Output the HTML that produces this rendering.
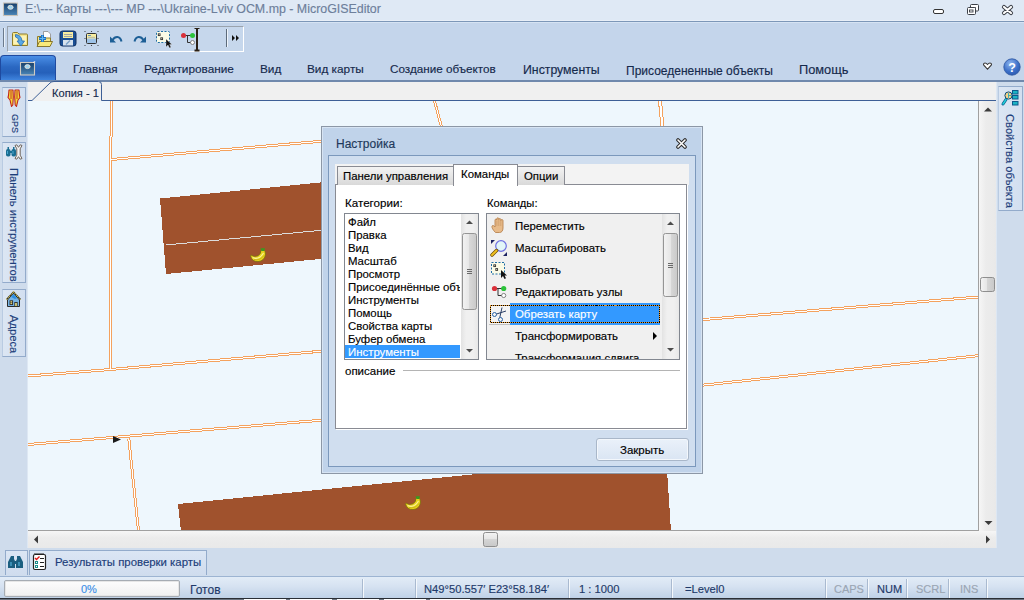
<!DOCTYPE html>
<html><head><meta charset="utf-8">
<style>
*{box-sizing:border-box}
html,body{margin:0;padding:0}
body{width:1024px;height:600px;overflow:hidden;position:relative;background:#cfdcec;font-family:"Liberation Sans",sans-serif;font-size:12px;color:#000}
.a{position:absolute}
.t{position:absolute;white-space:nowrap;line-height:1;-webkit-text-stroke:0.15px currentColor}
</style></head><body>

<!-- title bar -->
<div class="a" style="left:0;top:0;width:1024px;height:21px;background:#dfe9f5"></div>
<div class="a" style="left:0;top:20px;width:1024px;height:1px;background:#e8eff8"></div>
<div class="a" style="left:0;top:21px;width:1024px;height:1px;background:#7d97b8"></div>
<div class="a" style="left:0;top:22px;width:1024px;height:1px;background:#d6e3f3"></div>
<!-- ribbon -->
<div class="a" style="left:0;top:23px;width:1024px;height:57px;background:#c4d5eb"></div>
<div class="a" style="left:0;top:80px;width:1024px;height:2px;background:#7089ad"></div>

<!-- tab strip -->
<div class="a" style="left:28px;top:82px;width:968px;height:19px;background:#f0f0f0"></div>


<!-- title text -->
<svg class="a" style="left:2px;top:1px" width="17" height="16" viewBox="0 0 17 16">
<defs><linearGradient id="ig" x1="0" x2="0" y1="0" y2="1"><stop offset="0" stop-color="#163e6a"/><stop offset="1" stop-color="#4a86b8"/></linearGradient></defs>
<rect x="1.5" y="2" width="14" height="12.5" fill="url(#ig)" stroke="#c8c2b8" stroke-width="1.1"/>
<ellipse cx="8.5" cy="6.3" rx="2.6" ry="2" fill="#9fd4f0" stroke="#e8e4dc" stroke-width="0.9"/>
<path d="M14,2 l2,-1" stroke="#ddd" stroke-width="1"/>
</svg>
<div class="t" style="left:25px;top:3px;font-size:12.4px;color:#6d7f9b">E:\--- Карты ---\--- MP ---\Ukraine-Lviv OCM.mp - MicroGISEditor</div>
<!-- window buttons -->
<svg class="a" style="left:930px;top:2px" width="94" height="18" viewBox="930 2 94 18">
<rect x="933.5" y="9.5" width="10" height="4" rx="1.5" fill="#fff" stroke="#333" stroke-width="1"/>
<rect x="970.5" y="4.5" width="8" height="6.5" rx="1" fill="#fff" stroke="#3c4048"/>
<path d="M973.5,7.5h2v1.5" stroke="#3c4048" fill="none"/>
<rect x="967.5" y="7.5" width="8" height="7" rx="1" fill="#fff" stroke="#3c4048"/>
<rect x="969.5" y="10" width="3.5" height="2" fill="none" stroke="#3c4048" stroke-width="0.9"/>
<path d="M1004,7 L1011,13 M1011,7 L1004,13" stroke="#3c4048" stroke-width="4.2" stroke-linecap="round"/>
<path d="M1004,7 L1011,13 M1011,7 L1004,13" stroke="#fff" stroke-width="2.2" stroke-linecap="round"/>
</svg>

<!-- toolbar -->
<div class="a" style="left:3px;top:28px;width:2px;height:19px;background:#6b7a8c;border-right:1px solid #e8f0f8"></div>
<div class="a" style="left:7px;top:26px;width:237px;height:26px;border:1px solid #9aa3ad;border-right-color:#fff;border-bottom-color:#fff;background:#c6d7ec"></div>
<div class="a" style="left:226px;top:29px;width:1px;height:18px;background:#5d6b7b"></div>
<div class="a" style="left:227px;top:29px;width:1px;height:18px;background:#eef4fb"></div>
<svg class="a" style="left:231px;top:33px" width="10" height="10"><path d="M1,2 L4,5 L1,8Z M5,2 L8,5 L5,8Z" fill="#111"/></svg>
<svg class="a" style="left:10px;top:28px" width="230" height="24" viewBox="10 28 230 24">
<!-- open folder -->
<path d="M12.5,45.5 V33.5 q0,-1 1,-1 h4 l1.5,1.5 h7.5 q1,0 1,1 V45.5z" fill="#f5e58a" stroke="#8f7d2c"/>
<path d="M13.5,44 V36 h12.5 V44z" fill="#fbf3b8"/>
<path d="M15.5,34.5 q6,0.5 6.5,6.5 h2.5 l-3.5,5 -4,-5 h2 q-0.5,-3.5 -3.5,-4z" fill="#58a8e6" stroke="#2a6cb0" stroke-width="0.8"/>
<!-- new folder -->
<path d="M43.5,31.5 h4.5 l2.5,2.5 v6 h-7z" fill="#fff" stroke="#8c8c8c" stroke-width="0.8"/>
<path d="M37.5,45.5 V36.5 h4 l1.5,1.5 h7.5 V45.5z" fill="#f5e58a" stroke="#8f7d2c"/>
<path d="M37,46.5 l2.5,-5 h13 l-2.5,5z" fill="#f9ea7a" stroke="#7d6c22" stroke-width="0.9"/>
<path d="M42.5,35 v7 M39,38.5 h7" stroke="#1c6fc0" stroke-width="3"/>
<path d="M42.5,35.5 v6 M39.5,38.5 h6" stroke="#62b6f0" stroke-width="1.2"/>
<!-- save -->
<rect x="60" y="31" width="16" height="15" rx="2.5" fill="#1b4f94" stroke="#0f2f60"/>
<rect x="63" y="32" width="10" height="6" fill="#f8eda0"/>
<path d="M64,34.5h8M64,36.5h8" stroke="#8a93a8" stroke-width="0.8"/>
<rect x="63" y="40" width="10" height="5.5" fill="#d6e2ee"/>
<path d="M66,44.5 l4,-4" stroke="#7aa0c8" stroke-width="1.5"/>
<!-- save as / print -->
<g fill="#333"><circle cx="85" cy="31.5" r="0.6"/><circle cx="91.5" cy="31.5" r="0.6"/><circle cx="98" cy="31.5" r="0.6"/><circle cx="85" cy="38.5" r="0.6"/><circle cx="98" cy="38.5" r="0.6"/><circle cx="85" cy="45.5" r="0.6"/><circle cx="91.5" cy="45.5" r="0.6"/><circle cx="98" cy="45.5" r="0.6"/></g>
<rect x="86.5" y="33.5" width="10" height="10" rx="1" fill="#9ec3e8" stroke="#333"/>
<rect x="87" y="34" width="9" height="4.5" fill="#f8eda0"/>
<path d="M88,35.5h3" stroke="#3a7ac0" stroke-width="0.8"/>
<path d="M88,37.3h7" stroke="#8a93a8" stroke-width="0.6"/>
<!-- undo -->
<path d="M110,36.5 V42.5 H116 Z" fill="#1d5f96"/>
<path d="M112.5,40 C115,36 120,35.5 121.5,41.5" fill="none" stroke="#1d5f96" stroke-width="2"/>
<!-- redo -->
<path d="M146,36.5 V42.5 H140 Z" fill="#1d5f96"/>
<path d="M143.5,40 C141,36 136,35.5 134.5,41.5" fill="none" stroke="#1d5f96" stroke-width="2"/>
<!-- select -->
<rect x="156.5" y="31.5" width="13" height="11" rx="1" fill="#fbfbe6" stroke="#1f6fa6" stroke-dasharray="2,1.5"/>
<rect x="158.3" y="33.8" width="1.8" height="1.8" fill="none" stroke="#333" stroke-width="0.9"/>
<rect x="160.8" y="37.8" width="1.8" height="1.8" fill="none" stroke="#333" stroke-width="0.9"/>
<path d="M166,39 L166,47 L168,45 L169.5,48 L171,47.3 L169.6,44.5 L172,44.5 Z" fill="#111" stroke="#fff" stroke-width="0.3"/>
<!-- nodes -->
<path d="M183.5,35.5 H192.5 M187.5,35.5 V42.5 H192" stroke="#333" stroke-width="1" fill="none"/>
<circle cx="183.5" cy="35.5" r="2.5" fill="#d9303a"/>
<circle cx="192.5" cy="35.5" r="2.5" fill="#2bc23a"/>
<circle cx="192.5" cy="42.5" r="2" fill="#fff" stroke="#777" stroke-width="0.9"/>
<!-- I-beam cursor -->
<path d="M194.5,28 h5 M197,28 V50.5 M194.5,50.5 h5" stroke="#2a2016" stroke-width="2"/>
</svg>

<!-- app button -->
<div class="a" style="left:0;top:55px;width:56px;height:25px;border:1px solid #1f4aa0;border-bottom:none;border-radius:4px 4px 0 0;background:linear-gradient(#4a8ee6,#2b68c2 45%,#2560ba 70%,#3f84de)"></div>
<svg class="a" style="left:19px;top:61px" width="17" height="15" viewBox="0 0 17 15">
<rect x="1.5" y="1.5" width="14" height="12.5" fill="url(#ig)" stroke="#cfcac2" stroke-width="1.1"/>
<ellipse cx="8.5" cy="5.6" rx="2.6" ry="2" fill="#9fd4f0" stroke="#e8e4dc" stroke-width="0.9"/>
<path d="M14,1.5 l2.2,-1" stroke="#eee" stroke-width="1"/>
</svg>
<!-- menu -->
<div class="t" style="left:73px;top:63px;font-size:11.7px;color:#15294b">Главная</div>
<div class="t" style="left:144px;top:64px;font-size:11.8px;color:#15294b">Редактирование</div>
<div class="t" style="left:260px;top:64px;font-size:11.8px;color:#15294b">Вид</div>
<div class="t" style="left:307px;top:64px;font-size:11.8px;color:#15294b">Вид карты</div>
<div class="t" style="left:390px;top:63px;font-size:11.7px;color:#15294b">Создание объектов</div>
<div class="t" style="left:523px;top:64px;font-size:12.3px;color:#15294b">Инструменты</div>
<div class="t" style="left:626px;top:65px;font-size:12px;color:#15294b">Присоедененные объекты</div>
<div class="t" style="left:799px;top:64px;font-size:12.8px;color:#15294b">Помощь</div>
<svg class="a" style="left:980px;top:60px" width="14" height="12"><path d="M3.5,4.2 Q3.8,3 5,3 Q6.2,3 7.5,4.5 Q8.8,3 10,3 Q11.2,3 11.5,4.2 Q11.5,5 10.5,6 L7.5,9.3 L4.5,6 Q3.5,5 3.5,4.2Z" fill="#fff" stroke="#333" stroke-width="1.1"/></svg>
<svg class="a" style="left:1002px;top:58px" width="20" height="18" viewBox="0 0 20 18">
<defs><radialGradient id="hg" cx="0.4" cy="0.3" r="0.8"><stop offset="0" stop-color="#8fb5ee"/><stop offset="0.6" stop-color="#3b6fc8"/><stop offset="1" stop-color="#2a55a8"/></radialGradient></defs>
<circle cx="10" cy="9" r="8.2" fill="url(#hg)" stroke="#2c56a0" stroke-width="0.8"/>
<text x="10" y="13.5" text-anchor="middle" font-family="Liberation Sans" font-weight="bold" font-size="12.5" fill="#fff">?</text>
</svg>

<!-- doc tab -->
<svg class="a" style="left:20px;top:80px" width="980" height="22" viewBox="20 80 980 22">
<path d="M28,100.5 H32 L50,83 Q51.5,81.5 54,81.5 H98.5 Q101.5,81.5 101.5,84.5 V100.5 H996" fill="#f0f0f0" stroke="#3d5f96" stroke-width="1"/>
</svg>
<div class="a" style="left:28px;top:101px;width:950px;height:1px;background:#fff"></div>
<div class="t" style="left:52px;top:88px;font-size:11.1px;color:#15294b">Копия - 1</div>

<!-- left panel -->
<div class="a" style="left:0;top:82px;width:28px;height:466px;background:#cfdcec"></div>
<!-- right panel -->
<div class="a" style="left:996px;top:82px;width:28px;height:466px;background:#cfdcec"></div>


<!-- left panel tabs -->
<div class="a" style="left:27px;top:82px;width:1px;height:466px;background:#dde7f3"></div>
<div class="a" style="left:2px;top:87px;width:24px;height:50px;background:linear-gradient(90deg,#dce6f3,#d2dff0);border:1px solid #93abcb;border-left-color:#b9cbe2"></div>
<div class="a" style="left:2px;top:142px;width:24px;height:141px;background:linear-gradient(90deg,#dce6f3,#d2dff0);border:1px solid #93abcb;border-left-color:#b9cbe2"></div>
<div class="a" style="left:2px;top:289px;width:24px;height:68px;background:linear-gradient(90deg,#dce6f3,#d2dff0);border:1px solid #93abcb;border-left-color:#b9cbe2"></div>
<div class="t" style="left:9px;top:114px;font-size:9px;color:#1c3d7a;transform-origin:0 0;transform:translate(10px,0) rotate(90deg)">GPS</div>
<div class="t" style="left:9px;top:168px;font-size:11.2px;color:#1c3d7a;transform-origin:0 0;transform:translate(10px,0) rotate(90deg)">Панель инструментов</div>
<div class="t" style="left:9px;top:315px;font-size:11.2px;color:#1c3d7a;transform-origin:0 0;transform:translate(10px,0) rotate(90deg)">Адреса</div>
<svg class="a" style="left:0;top:85px" width="28" height="230" viewBox="0 85 28 230">
<!-- GPS icon -->
<path d="M9,90 L13,90 L13.3,97 L12.8,105 L11.5,106.5 L10,100 L8,97.5 L8.5,95.5 Z" fill="#f3d83a" stroke="#c2261c" stroke-width="1.1" stroke-linejoin="round"/>
<path d="M19,90 L15,90 L14.7,97 L15.2,105 L16.5,106.5 L18,100 L20,97.5 L19.5,95.5 Z" fill="#f3d83a" stroke="#c2261c" stroke-width="1.1" stroke-linejoin="round"/>
<path d="M11,91 V99 M17,91 V99" stroke="#c2261c" stroke-width="0.9"/>
<!-- binoculars + wrench -->
<rect x="6" y="149" width="4.5" height="7.5" rx="1.8" fill="#1b6e92"/>
<rect x="11.5" y="149" width="4.5" height="7.5" rx="1.8" fill="#1b6e92"/>
<rect x="7.5" y="147" width="1.5" height="3" fill="#1b6e92"/><rect x="13" y="147" width="1.5" height="3" fill="#1b6e92"/>
<rect x="9" y="151" width="4" height="2" fill="#1b6e92"/>
<path d="M7.5,151 v3 M13,151 v3" stroke="#58b8e0" stroke-width="0.8"/>
<path d="M15,145.5 L16.8,144.8 L18.5,147.3 L20.2,144.8 L22,145.5 L20.2,148.8 V155.2 L22,158.5 L20.2,159.2 L18.5,156.7 L16.8,159.2 L15,158.5 L16.8,155.2 V148.8 Z" fill="#f4f4f4" stroke="#6f665d" stroke-width="1"/>
<!-- house -->
<path d="M7.5,300 L13.5,293 L19.5,300 V306.5 H7.5 Z" fill="#78b4e4" stroke="#2a2a2a" stroke-width="1"/>
<path d="M11,297 L13.5,294 L17,298 L15,299z" fill="#2f8fe0"/>
<path d="M6.5,299.5 L13.5,292 L20.5,299.5" fill="none" stroke="#222" stroke-width="1.4"/>
<path d="M6.5,299.5 L13.5,292 L20.5,299.5" fill="none" stroke="#f5e060" stroke-width="1.2" stroke-dasharray="1,1"/>
<rect x="10" y="300.8" width="2.6" height="3.8" fill="#f5e27a" stroke="#2a2a2a" stroke-width="0.9"/>
<path d="M10,302.7h2.6" stroke="#2a2a2a" stroke-width="0.6"/>
<rect x="14.8" y="302.5" width="2.4" height="4" fill="#f8f08a" stroke="#2a2a2a" stroke-width="0.9"/>
</svg>

<!-- right panel tab -->
<div class="a" style="left:996px;top:82px;width:1px;height:466px;background:#dde7f3"></div>
<div class="a" style="left:998px;top:86px;width:25px;height:125px;background:linear-gradient(90deg,#dce6f3,#d2dff0);border:1px solid #93abcb;border-left-color:#b9cbe2"></div>
<div class="t" style="left:1005px;top:114px;font-size:11.2px;color:#1c3d7a;transform-origin:0 0;transform:translate(10px,0) rotate(90deg)">Свойства объекта</div>
<svg class="a" style="left:1000px;top:88px" width="22" height="20" viewBox="1000 88 22 20">
<rect x="1012.5" y="90.5" width="5.5" height="3.5" fill="#1ab4c4" stroke="#0c5a8c"/>
<rect x="1012.5" y="95.5" width="5.5" height="3.5" fill="#1ab4c4" stroke="#0c5a8c"/>
<rect x="1012.5" y="101.5" width="5.5" height="3.5" fill="#1ab4c4" stroke="#0c5a8c"/>
<circle cx="1008.5" cy="95.5" r="3.6" fill="#f7d488" stroke="#0c4a7c" stroke-width="1"/>
<path d="M1008.5,93 v5 M1008.5,95.5 h3" stroke="#2aa8b8" stroke-width="0.9"/>
<path d="M1003,104 L1006,99.5" stroke="#0c5a8c" stroke-width="3" stroke-linecap="round"/>
<path d="M1003,104 L1006,99.5" stroke="#22d0d8" stroke-width="1.5" stroke-linecap="round"/>
</svg>

<!-- map -->
<div class="a" style="left:28px;top:101px;width:950px;height:429px;background:#eef7fd;overflow:hidden">
<svg width="950" height="429" viewBox="28 101 950 429" style="position:absolute;left:0;top:0" shape-rendering="crispEdges">
<polygon points="160,198.5 330,181.5 330,258 166,274" fill="#a0522d"/>
<line x1="166" y1="245" x2="330" y2="229.5" stroke="#dcdcdc" stroke-width="1"/>
<polygon points="178,504 666,455 671,531 181,531" fill="#a0522d"/>
<g fill="none" stroke="#f4a25e" stroke-width="3">
<polyline points="111.5,101 111.5,136 110.5,137 110.5,370"/>
<polyline points="111,159.5 330,140.5"/>
<polyline points="434.5,101 441.5,127"/>
<polyline points="28,376 110.5,369.5 178,363.6 330,350.5"/>
<polyline points="695,320.2 978,297"/>
<polyline points="28,444.5 178,432 330,419.5"/>
<polyline points="695,386 978,355.7"/>
<polyline points="128.8,438.5 138.5,531"/>
</g>
<g fill="none" stroke="#ffffff" stroke-width="1">
<polyline points="111.5,101 111.5,136 110.5,137 110.5,370"/>
<polyline points="111,159.5 330,140.5"/>
<polyline points="434.5,101 441.5,127"/>
<polyline points="28,376 110.5,369.5 178,363.6 330,350.5"/>
<polyline points="695,320.2 978,297"/>
<polyline points="28,444.5 178,432 330,419.5"/>
<polyline points="695,386 978,355.7"/>
<polyline points="128.8,438.5 138.5,531"/>
</g>
<polyline points="660,101 662.5,127" fill="none" stroke="#f4a25e" stroke-width="4"/>
<polyline points="660,101 662.5,127" fill="none" stroke="#ffffff" stroke-width="2"/>
<polygon points="113,436 121,439.5 113,443" fill="#1a1a1a" shape-rendering="auto"/>
<g shape-rendering="auto" transform="translate(250,248)">
<path d="M0.5,8 Q2,13.8 8,13.6 Q14.8,13 15.6,6 Q15.6,3 13.5,1.8 L11,2.2 Q11,6 8,7.8 Q4,9.5 1,7 Z" fill="#e6d21c" stroke="#7c7010" stroke-width="0.8"/>
<path d="M2.5,9.5 Q9,12.5 13.5,5" stroke="#fbf39a" stroke-width="1.1" fill="none"/>
<path d="M4,11.5 Q10,13 14,7.5" stroke="#b8a812" stroke-width="0.6" fill="none"/>
<path d="M10.5,0.3 L15,0.3 L14,3 L11.5,3 Z" fill="#3a9a20"/>
</g>
<g shape-rendering="auto" transform="translate(405,496)">
<path d="M0.5,8 Q2,13.8 8,13.6 Q14.8,13 15.6,6 Q15.6,3 13.5,1.8 L11,2.2 Q11,6 8,7.8 Q4,9.5 1,7 Z" fill="#e6d21c" stroke="#7c7010" stroke-width="0.8"/>
<path d="M2.5,9.5 Q9,12.5 13.5,5" stroke="#fbf39a" stroke-width="1.1" fill="none"/>
<path d="M4,11.5 Q10,13 14,7.5" stroke="#b8a812" stroke-width="0.6" fill="none"/>
<path d="M10.5,0.3 L15,0.3 L14,3 L11.5,3 Z" fill="#3a9a20"/>
</g>
</svg>
</div>

<!-- scrollbars -->
<div class="a" style="left:978px;top:101px;width:1px;height:430px;background:#a0a0a0"></div>

<div class="a" style="left:28px;top:530px;width:951px;height:1px;background:#a0a0a0"></div>
<div class="a" style="left:28px;top:531px;width:968px;height:17px;background:linear-gradient(#f6f6f6,#ececec 40%,#e9e9e9)"></div>
<div class="a" style="left:979px;top:101px;width:17px;height:430px;background:linear-gradient(90deg,#f6f6f6,#ececec 40%,#e9e9e9)"></div>
<svg class="a" style="left:28px;top:101px" width="968" height="447" viewBox="28 101 968 447">
<defs><linearGradient id="thv" x1="0" x2="1"><stop offset="0" stop-color="#f4f4f4"/><stop offset="0.45" stop-color="#e6e6e6"/><stop offset="0.46" stop-color="#d6d6d6"/><stop offset="1" stop-color="#c8c8c8"/></linearGradient>
<linearGradient id="thh" x1="0" x2="0" y1="0" y2="1"><stop offset="0" stop-color="#f4f4f4"/><stop offset="0.45" stop-color="#e6e6e6"/><stop offset="0.46" stop-color="#d6d6d6"/><stop offset="1" stop-color="#c8c8c8"/></linearGradient></defs>
<path d="M984,111.5 L988,107.5 L992,111.5Z" fill="#3b3b3b"/>
<path d="M984.5,521 L988.5,525 L992.5,521Z" fill="#3b3b3b"/>
<path d="M38,535.5 L34,539.5 L38,543.5Z" fill="#3b3b3b"/>
<path d="M986,535.5 L990,539.5 L986,543.5Z" fill="#3b3b3b"/>
<rect x="980.5" y="277.5" width="14" height="14" rx="2" fill="url(#thv)" stroke="#8e8e8e"/>
<rect x="483.5" y="532.5" width="14" height="14" rx="2" fill="url(#thh)" stroke="#8e8e8e"/>
</svg>

<!-- bottom panel -->
<div class="a" style="left:0;top:548px;width:1024px;height:28px;background:#cfdcec"></div>


<!-- status bar -->
<div class="a" style="left:0;top:576px;width:1024px;height:1px;background:#9db4d2"></div>
<div class="a" style="left:0;top:577px;width:1024px;height:21px;background:linear-gradient(#e2ecf7,#d6e2f1 45%,#bfd1e7)"></div>
<div class="a" style="left:0;top:598px;width:1024px;height:1px;background:#2a2e35"></div><div class="a" style="left:0;top:599px;width:1024px;height:1px;background:#6b7480"></div>
<div class="a" style="left:244px;top:599px;width:42px;height:1px;background:#fff"></div><div class="a" style="left:290px;top:599px;width:42px;height:1px;background:#fff"></div><div class="a" style="left:337px;top:599px;width:42px;height:1px;background:#fff"></div><div class="a" style="left:384px;top:599px;width:42px;height:1px;background:#fff"></div><div class="a" style="left:430px;top:599px;width:40px;height:1px;background:#fff"></div>
<div class="a" style="left:4px;top:580px;width:176px;height:17px;border:1px solid #a6acb3;border-radius:2px;background:linear-gradient(#fdfdfd,#f0f0f0);box-shadow:inset 0 0 0 1px #e6e6e6"></div>
<div class="t" style="left:81px;top:584px;font-size:11px;color:#3a8ee8">0%</div>
<div class="t" style="left:190px;top:584px;font-size:12px;color:#1e3a6a">Готов</div>
<div class="t" style="left:424px;top:584px;font-size:11.2px;color:#1e3a6a">N49°50.557′ E23°58.184′</div>
<div class="t" style="left:579px;top:584px;font-size:11.2px;color:#1e3a6a">1 : 1000</div>
<div class="t" style="left:685px;top:584px;font-size:11.2px;color:#1e3a6a">=Level0</div>
<div class="t" style="left:834px;top:584px;font-size:11px;color:#9aa5b3">CAPS</div>
<div class="t" style="left:877px;top:584px;font-size:11px;color:#1e3a6a">NUM</div>
<div class="t" style="left:916px;top:584px;font-size:11px;color:#9aa5b3">SCRL</div>
<div class="t" style="left:960px;top:584px;font-size:11px;color:#9aa5b3">INS</div>
<svg class="a" style="left:0;top:578px" width="1024" height="20" viewBox="0 578 1024 20">
<g stroke="#a9bad0"><path d="M362.5,579V598M415.5,579V598M568.5,579V598M671.5,579V598M825.5,579V598M867.5,579V598M906.5,579V598M948.5,579V598M986.5,579V598"/></g>
<g stroke="#f4f8fc"><path d="M363.5,579V598M416.5,579V598M569.5,579V598M672.5,579V598M826.5,579V598M868.5,579V598M907.5,579V598M949.5,579V598M987.5,579V598"/></g>
</svg>


<!-- bottom panel tabs -->
<div class="a" style="left:5px;top:550px;width:23px;height:25px;background:linear-gradient(#dbe6f4,#cfdcee);border:1px solid #93abcb;border-bottom:none"></div>
<div class="a" style="left:29px;top:550px;width:178px;height:25px;background:linear-gradient(#dbe6f4,#cfdcee);border:1px solid #93abcb;border-bottom:none"></div>
<div class="t" style="left:55px;top:557px;font-size:11.4px;color:#1c3d7a">Результаты проверки карты</div>
<svg class="a" style="left:5px;top:550px" width="45" height="24" viewBox="5 550 45 24">
<path d="M11,556 h3 v3 l1,2 v7 h-7 v-6 z" fill="#1b5f80"/>
<path d="M17,556 h3 l3,6 v6 h-7 v-7 l1,-2z" fill="#1b5f80"/>
<rect x="14" y="561" width="3" height="3" fill="#1b5f80"/>
<path d="M11,562 v4 M19,562 v4" stroke="#5cc0e8" stroke-width="1"/>
<rect x="33.5" y="554.5" width="12" height="15" rx="1.5" fill="#fff" stroke="#222" stroke-width="1.2"/>
<path d="M35,554 v-1 M37,554 v-1 M39,554 v-1 M41,554 v-1 M43,554 v-1" stroke="#222"/>
<path d="M35,558 l1.5,1.5 l3,-3" stroke="#e01818" stroke-width="1.4" fill="none"/>
<rect x="35.5" y="561.5" width="2" height="2" fill="none" stroke="#1a8c8c"/>
<rect x="35.5" y="565.5" width="2" height="2" fill="none" stroke="#1a8c8c"/>
<path d="M40,558.5 h4 M40,562.5 h4 M40,566.5 h4" stroke="#222" stroke-width="1.2"/>
</svg>


<!-- dialog -->
<div class="a" style="left:321px;top:126px;width:382px;height:348px;background:#c0d3ea;border:1px solid #8c97a6;box-shadow:inset 1px 1px 0 #d7e4f3, inset -1px -1px 0 #d7e4f3"></div>
<div class="t" style="left:336px;top:138px;font-size:12px;color:#1e395b">Настройка</div>
<svg class="a" style="left:675px;top:138px" width="14" height="11" viewBox="0 0 14 11">
<path d="M3,2 L10,9 M10,2 L3,9" stroke="#2b2b2b" stroke-width="3.6" stroke-linecap="round"/>
<path d="M3,2 L10,9 M10,2 L3,9" stroke="#ffffff" stroke-width="1.6" stroke-linecap="round"/>
</svg>
<div class="a" style="left:328px;top:155px;width:368px;height:312px;background:#d0deef;border:1px solid #7b98bc"></div>
<div class="a" style="left:335px;top:164px;width:354px;height:21px;background:#f3f3f3"></div>
<!-- tab page -->
<div class="a" style="left:335px;top:184px;width:352px;height:245px;background:#fff;border:1px solid #898b93;box-shadow:1px 1px 0 #fff"></div>
<!-- tabs -->
<div class="a" style="left:337px;top:166px;width:117px;height:19px;background:linear-gradient(#f3f3f3,#e6e6e6 50%,#d9d9d9);border:1px solid #898b93;border-bottom:none"></div>
<div class="t" style="left:343px;top:171px;font-size:11.4px">Панели управления</div>
<div class="a" style="left:517px;top:166px;width:48px;height:19px;background:linear-gradient(#f3f3f3,#e6e6e6 50%,#d9d9d9);border:1px solid #898b93;border-bottom:none"></div>
<div class="t" style="left:524px;top:171px;font-size:11.4px">Опции</div>
<div class="a" style="left:453px;top:164px;width:65px;height:22px;background:#fff;border:1px solid #898b93;border-bottom:none"></div>
<div class="t" style="left:461px;top:169px;font-size:11.4px">Команды</div>

<div class="t" style="left:345px;top:197px;font-size:11.6px">Категории:</div>
<div class="t" style="left:487px;top:198px;font-size:11.2px">Команды:</div>

<!-- category list -->
<div class="a" style="left:344px;top:213px;width:135px;height:147px;background:#fff;border:1px solid #828790"></div>
<div class="a" style="left:345px;top:345px;width:115px;height:13px;background:#3399ff"></div>
<div class="a" style="left:348px;top:216px;font-size:11.4px;line-height:13px;white-space:nowrap;width:112px;overflow:hidden;-webkit-text-stroke:0.15px currentColor">Файл<br>Правка<br>Вид<br>Масштаб<br>Просмотр<br>Присоединённые объекты<br>Инструменты<br>Помощь<br>Свойства карты<br>Буфер обмена<br><span style="color:#fff">Инструменты</span></div>
<div class="a" style="left:461px;top:214px;width:17px;height:145px;background:linear-gradient(90deg,#e3e3e3,#f0f0f0 30%,#f0f0f0 70%,#e8e8e8)"></div>
<svg class="a" style="left:461px;top:214px" width="17" height="145">
<path d="M5,10 L8.5,6.5 L12,10 Z" fill="#4d4d4d"/>
<path d="M5,135 L8.5,138.5 L12,135 Z" fill="#4d4d4d"/>
<rect x="1.5" y="19.5" width="14" height="76" rx="2" fill="url(#sbg)" stroke="#959595"/>
<path d="M6,55.5h5M6,57.5h5M6,59.5h5" stroke="#6a6a6a"/>
<defs><linearGradient id="sbg" x1="0" x2="1"><stop offset="0" stop-color="#f3f3f3"/><stop offset="0.5" stop-color="#e6e6e6"/><stop offset="0.5" stop-color="#d8d8d8"/><stop offset="1" stop-color="#c9c9c9"/></linearGradient></defs>
</svg>

<!-- commands list -->
<div class="a" style="left:486px;top:213px;width:194px;height:147px;background:#f0f0f0;border:1px solid #828790;overflow:hidden">
 <div class="a" style="left:2px;top:89px;width:21px;height:22px;background:#f4f4f4;border-bottom:1px solid #c0c0c0"></div>
 <div class="a" style="left:23px;top:89px;width:150px;height:22px;background:#3399ff"></div>
 <svg class="a" style="left:3px;top:91px" width="170" height="18" shape-rendering="crispEdges"><rect x="0.5" y="0.5" width="169" height="17" fill="none" stroke="#e89a30" stroke-width="1"/><rect x="0.5" y="0.5" width="169" height="17" fill="none" stroke="#000" stroke-width="1" stroke-dasharray="1,1"/></svg>
 <div class="t" style="left:28px;top:7px;font-size:11.4px">Переместить</div>
 <div class="t" style="left:28px;top:29px;font-size:11.4px">Масштабировать</div>
 <div class="t" style="left:28px;top:51px;font-size:11.4px">Выбрать</div>
 <div class="t" style="left:28px;top:73px;font-size:11.4px">Редактировать узлы</div>
 <div class="t" style="left:28px;top:95px;font-size:11.4px;color:#fff">Обрезать карту</div>
 <div class="t" style="left:28px;top:117px;font-size:11.4px">Трансформировать</div>
 <div class="t" style="left:28px;top:139px;font-size:11.4px">Трансформация сдвига</div>
<svg class="a" style="left:-1px;top:-1px" width="24" height="120" viewBox="486 213 24 120">
<!-- hand -->
<path d="M495.5,232.5 C493,230 491.5,227.5 492,226 C492.5,225 494,225.5 495,227 L495,220 C495,218.8 496.8,218.8 496.8,220 L496.8,218.8 C496.8,217.5 498.8,217.5 498.8,218.8 L498.8,219.5 C498.8,218.3 500.8,218.3 500.8,219.5 L500.8,220.5 C500.8,219.3 503,219.3 503,220.5 L503,228 C503,231 501.5,232.5 499.5,232.5 Z" fill="#e8bb8a" stroke="#b98451" stroke-width="0.9"/>
<path d="M496.9,220.5 v5.5 M498.8,219.5 v6.5 M500.8,220.5 v5.5" stroke="#c4935f" stroke-width="0.6"/>
<!-- magnifier -->
<circle cx="501" cy="246" r="5.3" fill="#e2f6f8" stroke="#6d6fe0" stroke-width="1.2"/>
<path d="M492,255 L496.5,250.5" stroke="#6a4a00" stroke-width="3.4" stroke-linecap="round"/><path d="M492,255 L496.5,250.5" stroke="#f0c020" stroke-width="2" stroke-linecap="round"/>
<path d="M491,240 h4 l-4,4z" fill="#1c2260"/>
<path d="M507,256 h-4 l4,-4z" fill="#1c2260"/>
<!-- select -->
<rect x="491.5" y="262.5" width="13" height="11.5" fill="#fbfbe6" stroke="#1f6fa6" stroke-dasharray="2,1.5"/>
<rect x="493.8" y="264.8" width="1.8" height="1.8" fill="none" stroke="#333" stroke-width="0.9"/>
<rect x="495.8" y="268.6" width="1.8" height="1.8" fill="none" stroke="#333" stroke-width="0.9"/>
<path d="M501,270 L501,278 L503,276 L504.5,279 L506,278.3 L504.6,275.5 L507,275.5 Z" fill="#111"/>
<!-- nodes -->
<path d="M494.5,288.5 H503.5 M498,288.5 V295.5 H503" stroke="#333" stroke-width="1" fill="none"/>
<circle cx="494.5" cy="288.5" r="2.6" fill="#d9303a"/>
<circle cx="503.7" cy="288.5" r="2.6" fill="#2bc23a"/>
<circle cx="503.7" cy="295.5" r="2.1" fill="#fff" stroke="#777" stroke-width="0.9"/>
<!-- scissors -->
<circle cx="494.5" cy="314.5" r="2" fill="none" stroke="#2a64a8" stroke-width="1"/>
<circle cx="500.5" cy="319.5" r="2" fill="none" stroke="#2a64a8" stroke-width="1"/>
<path d="M496.5,314 L506,311 M499.8,317.5 L502,307.5" stroke="#2b3f66" stroke-width="1"/>
</svg>
 <svg class="a" style="left:165px;top:117px" width="6" height="10"><path d="M1,1 L5,5 L1,9Z" fill="#000"/></svg>
</div>
<div class="a" style="left:662px;top:214px;width:17px;height:145px;background:linear-gradient(90deg,#e3e3e3,#f0f0f0 30%,#f0f0f0 70%,#e8e8e8)"></div>
<svg class="a" style="left:662px;top:214px" width="17" height="145">
<path d="M5,11 L8.5,7.5 L12,11 Z" fill="#4d4d4d"/>
<path d="M5,134 L8.5,137.5 L12,134 Z" fill="#4d4d4d"/>
<rect x="1.5" y="19.5" width="14" height="63" rx="2" fill="url(#sbg)" stroke="#959595"/>
<path d="M6,49.5h5M6,51.5h5M6,53.5h5" stroke="#6a6a6a"/>
</svg>

<div class="t" style="left:345px;top:366px;font-size:11.5px">описание</div>
<div class="a" style="left:403px;top:370px;width:277px;height:1px;background:#b4b4b4"></div>

<div class="a" style="left:596px;top:438px;width:93px;height:23px;border:1px solid #a9b7c9;border-radius:3px;background:linear-gradient(#eaf1fa,#dae5f3);box-shadow:inset 0 0 0 1px #f3f7fc"></div>
<div class="t" style="left:620px;top:445px;font-size:11.5px">Закрыть</div>


</body></html>
